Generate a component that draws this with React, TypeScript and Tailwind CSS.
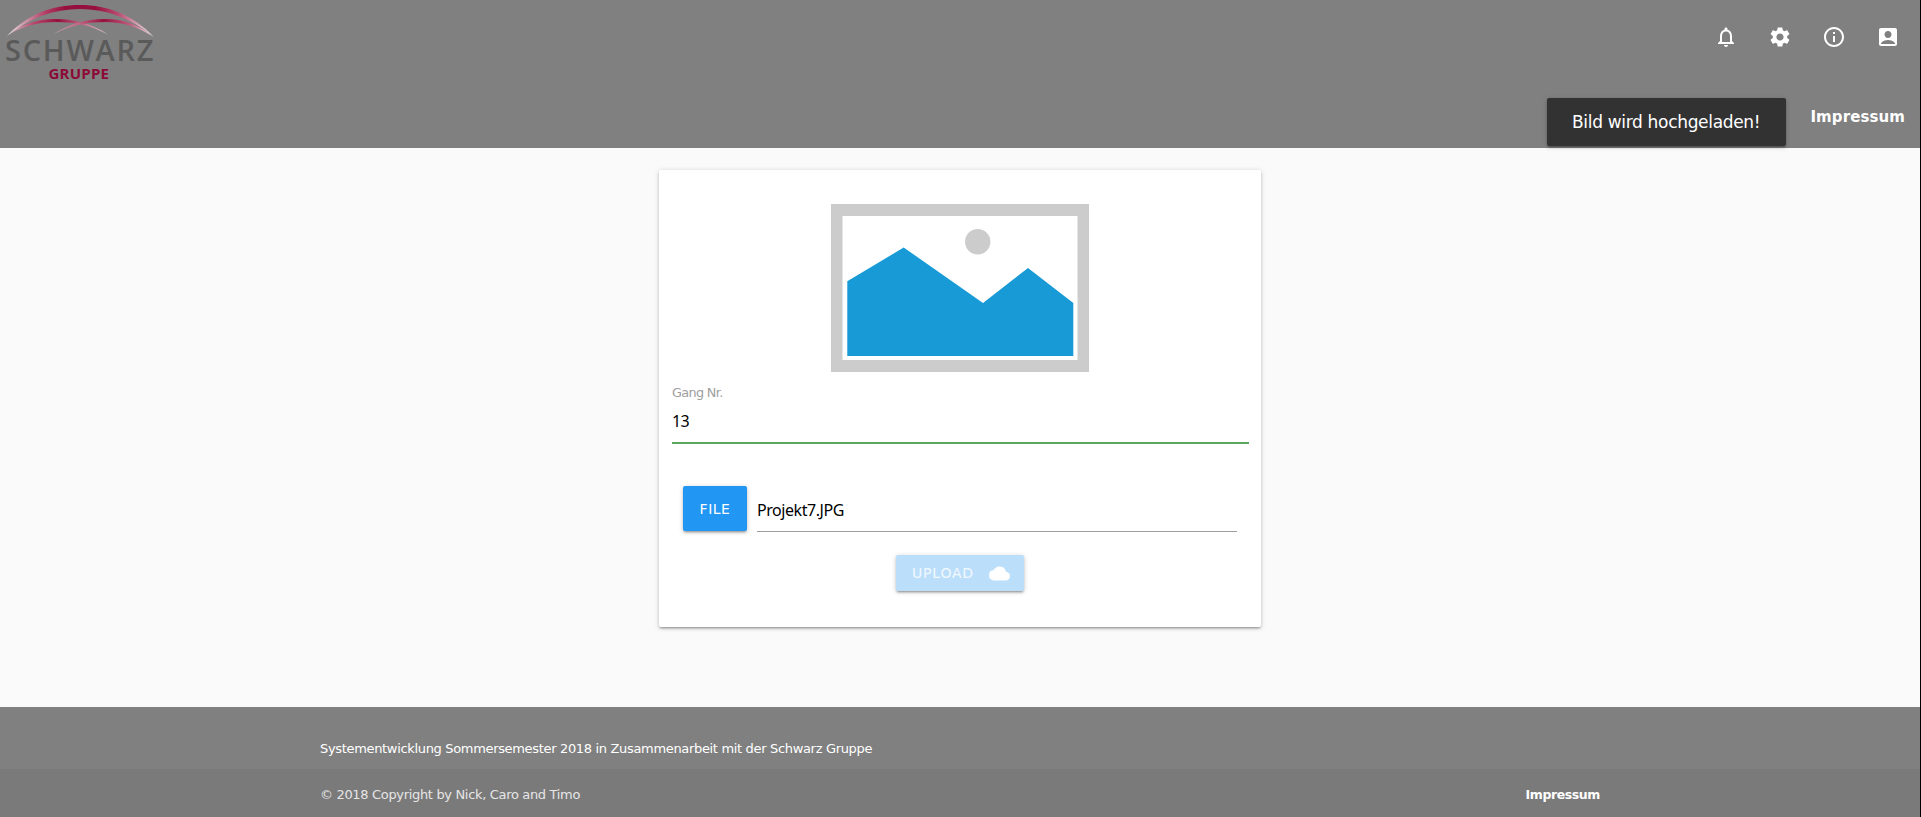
import React from "react";
import {
  MdNotificationsNone,
  MdSettings,
  MdInfoOutline,
  MdAccountBox,
  MdCloud,
} from "react-icons/md";

const verdana = "font-['DejaVu_Sans',Verdana,sans-serif]";
const segoe = "font-['Noto_Sans','Open_Sans',sans-serif]";

function Logo() {
  return (
    <svg width="170" height="90" viewBox="0 0 170 90" className="block">
      <defs>
        <linearGradient id="arcMain" x1="0" x2="1" y1="0" y2="0">
          <stop offset="0" stopColor="#f4eef0" />
          <stop offset="0.1" stopColor="#d3a3b3" />
          <stop offset="0.27" stopColor="#b03a63" />
          <stop offset="0.4" stopColor="#960f3e" />
          <stop offset="0.6" stopColor="#960f3e" />
          <stop offset="0.75" stopColor="#b8486f" />
          <stop offset="0.9" stopColor="#d9a9b9" />
          <stop offset="1" stopColor="#f4eef0" />
        </linearGradient>
        <linearGradient id="arcLeft" x1="0" x2="1" y1="0" y2="0">
          <stop offset="0" stopColor="#e8c9d3" />
          <stop offset="0.25" stopColor="#b84a70" />
          <stop offset="0.5" stopColor="#960f3e" />
          <stop offset="0.75" stopColor="#c06b88" />
          <stop offset="1" stopColor="#ded0d5" />
        </linearGradient>
        <linearGradient id="arcRight" x1="0" x2="1" y1="0" y2="0">
          <stop offset="0" stopColor="#b5a2a9" />
          <stop offset="0.25" stopColor="#c06b88" />
          <stop offset="0.5" stopColor="#960f3e" />
          <stop offset="0.78" stopColor="#c25f81" />
          <stop offset="1" stopColor="#f4eef0" />
        </linearGradient>
      </defs>
      <path d="M7 36C28 14 52 5 80 5s53 10 74 32C130 18 107 9 80 9S30 18 7 36z" fill="url(#arcMain)" />
      <path d="M8 35C23 24 37 19 55 19c22 0 37 5 53 15.500C91 25.500 76 22 56 22c-18 0-33 4-48 13z" fill="url(#arcLeft)" />
      <path d="M53 34.500C69 24 84 19 105 19c19 0 34 6 48 17.500C138 27 123 22 105 22c-20 0-35 4-52 12.500z" fill="url(#arcRight)" />
      <text x="5" y="61" textLength="148.500" lengthAdjust="spacing" fontSize="29" fontWeight="600" fill="#5a5a5a" className="font-['Open_Sans',sans-serif]">
        SCHWARZ
      </text>
      <text x="48.500" y="79" textLength="60.500" lengthAdjust="spacing" fontSize="15" fontWeight="700" fill="#8c0a37" className="font-['Open_Sans',sans-serif]">
        GRUPPE
      </text>
    </svg>
  );
}

function Header() {
  return (
    <header className="flex h-[148px] justify-between bg-[#808080] text-white">
      <Logo />
      <div className="flex flex-col items-end">
        <nav className="mt-[25px] mr-5 flex gap-[30px]">
          <MdNotificationsNone size={24} />
          <MdSettings size={24} />
          <MdInfoOutline size={24} />
          <MdAccountBox size={24} />
        </nav>
        <a className="mt-[57px] mr-[15px] text-[15px] leading-[22px] font-bold tracking-[0.1px]">Impressum</a>
      </div>
    </header>
  );
}

function Placeholder() {
  return (
    <svg width="258" height="168" viewBox="0 0 258 168" className="mx-auto block">
      <path d="M0 0h258v168H0z" fill="#ccc" />
      <path d="M11.500 12h235v144h-235z" fill="#fff" />
      <circle cx="146.700" cy="37.700" r="12.700" fill="#ccc" />
      <path d="M16.300 77.300L72.700 43.500L152 99L197 64L242.300 99V152H16.300z" fill="#179ad6" />
    </svg>
  );
}

const raised =
  "shadow-[0_2px_2px_0_rgba(0,0,0,0.14),0_3px_1px_-2px_rgba(0,0,0,0.12),0_1px_5px_0_rgba(0,0,0,0.2)]";

function UploadCard() {
  return (
    <section className={`mx-auto mt-[22px] h-[457px] w-[602px] rounded-[2px] bg-white pt-[34px] ${raised}`}>
      <Placeholder />
      <div className="mx-[13px] mt-[11px] h-[61px] w-[577px] border-b-2 border-[#5aa85c]">
        <label className="block text-[12.800px] leading-[20px] tracking-[-0.65px] text-[#9e9e9e]">Gang Nr.</label>
        <div className={`mt-[7px] text-[16px] leading-[22px] tracking-[-0.7px] text-black ${segoe}`}>13</div>
      </div>
      <div className="mt-[42px] ml-[24px] flex gap-[10px]">
        <button className={`h-[45px] w-[64px] rounded-[2px] bg-[#2196f3] pt-px text-[14px] tracking-[0.5px] text-white ${raised}`}>FILE</button>
        <div className={`h-[46px] w-[480px] border-b border-[#9e9e9e] pt-[13px] text-[16px] leading-[22px] tracking-[-0.45px] text-black ${segoe}`}>
          Projekt7.JPG
        </div>
      </div>
      <button className={`mx-auto mt-[23px] flex h-[36px] w-[128px] items-center justify-between rounded-[2px] bg-[#bbdefb] pr-[14px] pl-4 text-[14px] tracking-[0.8px] text-white/80 ${raised}`}>
        <span>UPLOAD</span>
        <MdCloud size={21} className="text-white" />
      </button>
    </section>
  );
}

function Footer() {
  return (
    <footer className="bg-[#808080] text-[13px] leading-[20px] tracking-[-0.33px] text-white">
      <div className="h-[62px] pt-[32px] pl-[320px]">
        <span>Systementwicklung Sommersemester 2018 in Zusammenarbeit mit der Schwarz Gruppe</span>
      </div>
      <div className="flex h-[48px] items-start justify-between bg-[#7a7a7a] pt-[16px] pr-[320px] pl-[320px]">
        <span className="text-[#e6e6e6]">© 2018 Copyright by Nick, Caro and Timo</span>
        <a className="text-[12.500px] font-bold tracking-[-0.4px]">Impressum</a>
      </div>
    </footer>
  );
}

export default function App() {
  return (
    <div className={`relative h-[817px] w-[1921px] overflow-hidden border-r border-black bg-[#fafafa] ${verdana}`}>
      <Header />
      <main className="h-[559px] overflow-hidden">
        <UploadCard />
      </main>
      <Footer />
      <div className={`absolute top-[98px] left-[1547px] flex h-[48px] w-[239px] items-center rounded-[2px] bg-[#323232] pt-[2px] pl-[25px] text-[17px] tracking-[-0.32px] whitespace-nowrap text-white ${raised}`}>
        Bild wird hochgeladen!
      </div>
    </div>
  );
}
